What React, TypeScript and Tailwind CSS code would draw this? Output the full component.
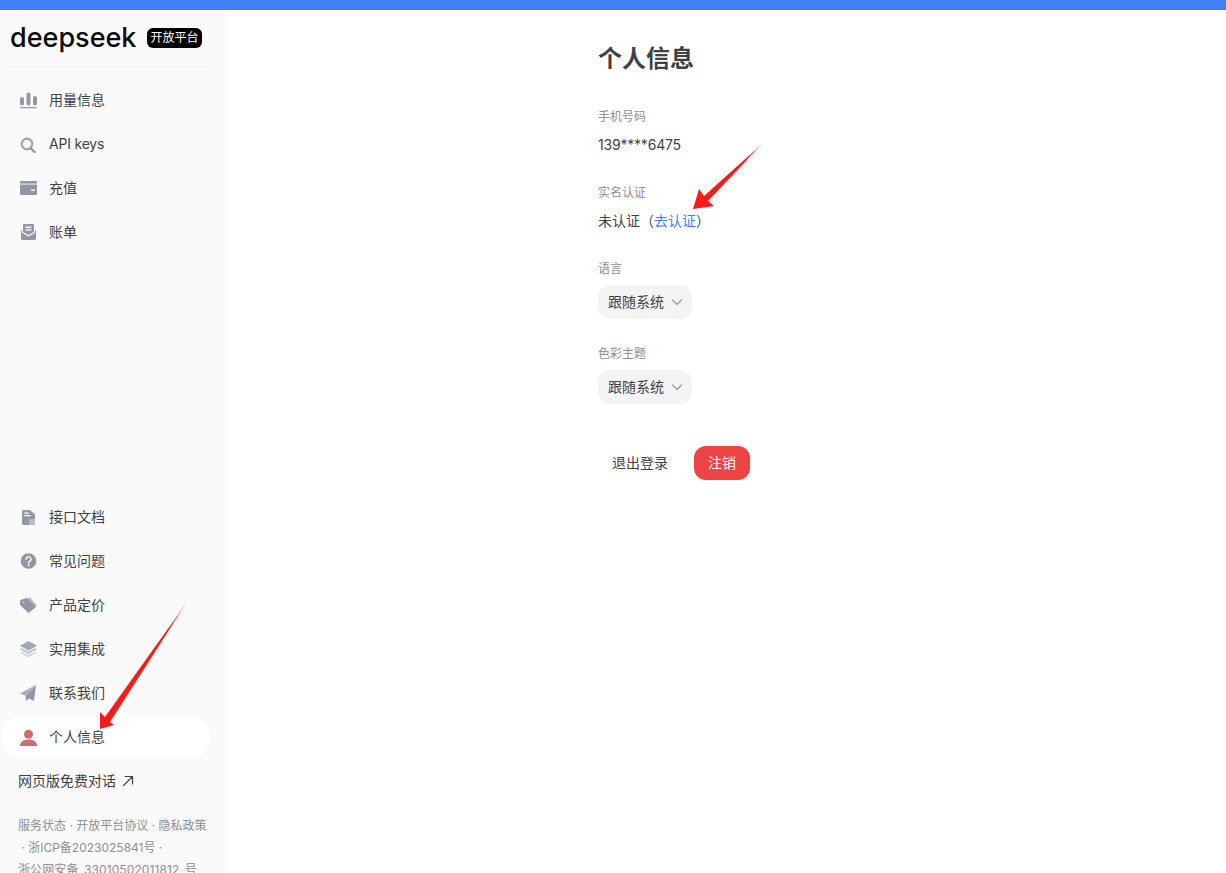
import React from "react";

const Icon = ({ children }: { children: React.ReactNode }) => (
  <svg viewBox="0 0 18 18" className="w-[18px] h-[18px] shrink-0" fill="#9396a5">{children}</svg>
);

const icons: Record<string, React.ReactNode> = {
  usage: (
    <Icon>
      <rect x="1" y="6" width="4" height="8.500" rx="2" />
      <rect x="7.500" y="1.500" width="4" height="13" rx="2" />
      <rect x="14" y="5" width="4" height="9.500" rx="2" />
      <rect x="1" y="16" width="17" height="1.200" rx="0.600" />
    </Icon>
  ),
  keys: (
    <Icon>
      <circle cx="8" cy="9" r="5.300" fill="none" stroke="#a0a3b0" strokeWidth="2.200" />
      <path d="M12 13.500 L15.500 17" stroke="#9396a5" strokeWidth="2.400" strokeLinecap="round" />
    </Icon>
  ),
  card: (
    <Icon>
      <path d="M1 2h17v2.600H1z" />
      <path fillRule="evenodd" d="M1 5.600h17V15a1 1 0 0 1-1 1H2a1 1 0 0 1-1-1zM12 10.500v1.600h4v-1.600z" />
    </Icon>
  ),
  bill: (
    <Icon>
      <path fillRule="evenodd" d="M5 1h9a1 1 0 0 1 1 1v7l-5.500 3L4 9V2a1 1 0 0 1 1-1zM6.500 3.500V5h6V3.500zM6.500 6.300v1.200h6V6.300z" />
      <path d="M2 7.500 3 7v2.800l6.500 3.700 6.500-3.700V7l1 .5v8a1.500 1.500 0 0 1-1.500 1.500h-12A1.500 1.500 0 0 1 2 15.500z" />
    </Icon>
  ),
  doc: (
    <Icon>
      <path fillRule="evenodd" d="M4.500 2h6.500L16 6.500V15.500A1.500 1.500 0 0 1 14.500 17h-10A1.500 1.500 0 0 1 3 15.500v-12A1.500 1.500 0 0 1 4.500 2zM5.300 4.500v1.200H10V4.500zM5.300 7V8.200H12V7z" />
      <rect x="10" y="11" width="6" height="6" rx="1" fill="#b9bbc6" />
    </Icon>
  ),
  help: (
    <Icon>
      <circle cx="9.500" cy="9" r="7.800" />
      <path d="M7.200 7.200a2.400 2.400 0 1 1 3.600 2c-.8.500-1.200.9-1.200 1.700" fill="none" stroke="#fff" strokeWidth="1.400" strokeLinecap="round" />
      <circle cx="9.600" cy="13.200" r="0.950" fill="#fff" />
    </Icon>
  ),
  tag: (
    <Icon>
      <path d="M8 2 L11 1.500 L18 9.500 L14 12z" fill="#b9bbc6" />
      <path fillRule="evenodd" stroke="#9396a5" strokeWidth="1" strokeLinejoin="round" d="M1.500 4.500 7.500 2.500 16.500 11 9.500 16.500 1.500 9zM4.500 5.200a1.100 1.100 0 1 0 0 2.200 1.100 1.100 0 0 0 0-2.200z" />
    </Icon>
  ),
  layers: (
    <Icon>
      <path d="M9.500 1 18 5.800 9.500 10.500 1 5.800z" fill="#a3a6b4" />
      <path d="M2.800 8 9.500 11.700 16.200 8 18 9.300 9.500 14 1 9.300z" fill="#bfc1cc" />
      <path d="M2.800 11.500 9.500 15.200 16.200 11.500 18 12.800 9.500 17.500 1 12.800z" fill="#d6d8df" />
    </Icon>
  ),
  send: (
    <Icon>
      <path d="M17 1 1 9.500l5 2z" fill="#a8aab8" />
      <path d="M17 1 6.500 11.500 7 17 10 14.500 15 17z" />
    </Icon>
  ),
  user: (
    <Icon>
      <circle cx="9.500" cy="6.200" r="4.500" fill="#c96f6f" />
      <path d="M1 18c0-4 3-6.500 8.500-6.500S18 14 18 18z" fill="#c96f6f" />
    </Icon>
  ),
};

const NavItem = ({ icon, label, active, latin }: { icon: string; label: string; active?: boolean; latin?: boolean }) => (
  <div className="h-11 flex items-center">
    <div className={`ml-[2px] w-[208px] h-[42px] pl-[17px] flex items-center gap-[12px] rounded-[20px] ${active ? "bg-white" : ""}`}>
      {icons[icon]}
      <span className={`text-[14px] leading-[20px] pb-[1px] text-[#3f3f46] ${latin ? "tracking-[-0.2px]" : ""}`}>{label}</span>
    </div>
  </div>
);

const Field = ({ label, children }: { label: string; children: React.ReactNode }) => (
  <div className="flex flex-col">
    <div className="text-[12px] leading-[18px] text-[#8e8e93]">{label}</div>
    {children}
  </div>
);

const Select = () => (
  <div className="mt-[7px] w-[94px] h-[34px] rounded-[12px] bg-[#f4f4f5] flex items-center pl-[10px] gap-[7px] text-[14px] text-[#3f3f46]">
    <span className="pb-[2px]">跟随系统</span>
    <svg viewBox="0 0 12 12" className="w-[12px] h-[12px]" fill="none" stroke="#9a9a9f" strokeWidth="1.200" strokeLinecap="round" strokeLinejoin="round">
      <path d="M1.500 4 6 8.500 10.500 4" />
    </svg>
  </div>
);

export default function App() {
  return (
    <div
      className="relative w-[1226px] h-[873px] overflow-hidden bg-white flex flex-col"
      style={{ fontFamily: 'Inter, "Noto Sans CJK SC", sans-serif' }}
    >
      <div className="h-[10px] shrink-0 bg-[#4080f8]" />
      <div className="flex flex-1 min-h-0">
        <aside className="w-[225px] shrink-0 bg-[#fafafa] overflow-hidden">
          <div className="ml-[2px] w-[208px] h-[57px] border-b border-[#f3f3f3] flex items-center pl-[8px] gap-[11px] pb-[1px]">
            <span className="w-[126px] text-[#0a0a0a] text-[27px] leading-none font-medium whitespace-nowrap">deepseek</span>
            <span className="h-[20px] w-[55px] rounded-[6px] bg-black text-white text-[12px] flex items-center justify-center">开放平台</span>
          </div>
          <div className="mt-[11px] flex flex-col">
            <NavItem icon="usage" label="用量信息" />
            <NavItem icon="keys" label="API keys" latin />
            <NavItem icon="card" label="充值" />
            <NavItem icon="bill" label="账单" />
          </div>
          <div className="mt-[241px] flex flex-col">
            <NavItem icon="doc" label="接口文档" />
            <NavItem icon="help" label="常见问题" />
            <NavItem icon="tag" label="产品定价" />
            <NavItem icon="layers" label="实用集成" />
            <NavItem icon="send" label="联系我们" />
            <NavItem icon="user" label="个人信息" active />
          </div>
          <div className="h-11 pl-[18px] flex items-center gap-[6px] text-[14px] text-[#3f3f46]">
            <span className="pb-[2px]">网页版免费对话</span>
            <svg viewBox="0 0 12 12" className="w-[12px] h-[12px]" fill="none" stroke="#3f3f46" strokeWidth="1.200" strokeLinecap="round">
              <path d="M1.500 10.500 10.500 1.500M3 1.500h7.500V9" />
            </svg>
          </div>
          <div className="mt-[12px] pl-[18px] w-[215px] text-[12px] leading-[22px] text-[#8e8e93]">
            <div className="whitespace-nowrap">服务状态 · 开放平台协议 · 隐私政策</div>
            <div className="whitespace-nowrap">&nbsp;· 浙ICP备2023025841号 ·</div>
            <div className="whitespace-nowrap [word-spacing:2px] tracking-[0.1px]">浙公网安备 33010502011812 号</div>
          </div>
        </aside>
        <main className="flex-1 pl-[373px] pt-[32px] text-[#3f3f46]">
          <h1 className="text-[24px] leading-[34px] font-bold text-[#3f3f46]">个人信息</h1>
          <div className="mt-[32px] flex flex-col gap-[29px]">
            <Field label="手机号码">
              <div className="mt-[8px] text-[14px] leading-[21px] tracking-[-0.2px]">139****6475</div>
            </Field>
            <Field label="实名认证">
              <div className="mt-[8px] text-[14px] leading-[21px]">
                未认证（<span className="text-[#3b82f6]">去认证</span>）
              </div>
            </Field>
          </div>
          <div className="mt-[29px] flex flex-col gap-[26px]">
            <Field label="语言"><Select /></Field>
            <Field label="色彩主题"><Select /></Field>
          </div>
          <div className="mt-[42px] flex items-center gap-[12px]">
            <button className="w-[84px] h-[34px] pb-[2px] rounded-[12px] text-[14px] text-[#3f3f46]">退出登录</button>
            <button className="w-[56px] h-[34px] pb-[2px] rounded-[12px] bg-[#ef4444] text-white text-[14px]">注销</button>
          </div>
        </main>
      </div>
      <svg className="absolute left-0 top-0 pointer-events-none" width="1226" height="873" viewBox="0 0 1226 873">
        <defs>
          <linearGradient id="a1" x1="763" y1="143" x2="693" y2="209" gradientUnits="userSpaceOnUse">
            <stop offset="0" stopColor="#ff1a1a" stopOpacity="0.3" />
            <stop offset="0.25" stopColor="#ff1a1a" />
            <stop offset="1" stopColor="#ff1a1a" />
          </linearGradient>
          <linearGradient id="a2" x1="187" y1="602" x2="100" y2="728" gradientUnits="userSpaceOnUse">
            <stop offset="0" stopColor="#ff1a1a" stopOpacity="0.3" />
            <stop offset="0.2" stopColor="#ff1a1a" />
            <stop offset="1" stopColor="#ff1a1a" />
          </linearGradient>
        </defs>
        <polygon points="763,143 708,201 714,206 693,209 699,189 704,196" fill="url(#a1)" />
        <polygon points="187,602 110,722 114,725 100,729 100,712 105,717" fill="url(#a2)" />
      </svg>
    </div>
  );
}
